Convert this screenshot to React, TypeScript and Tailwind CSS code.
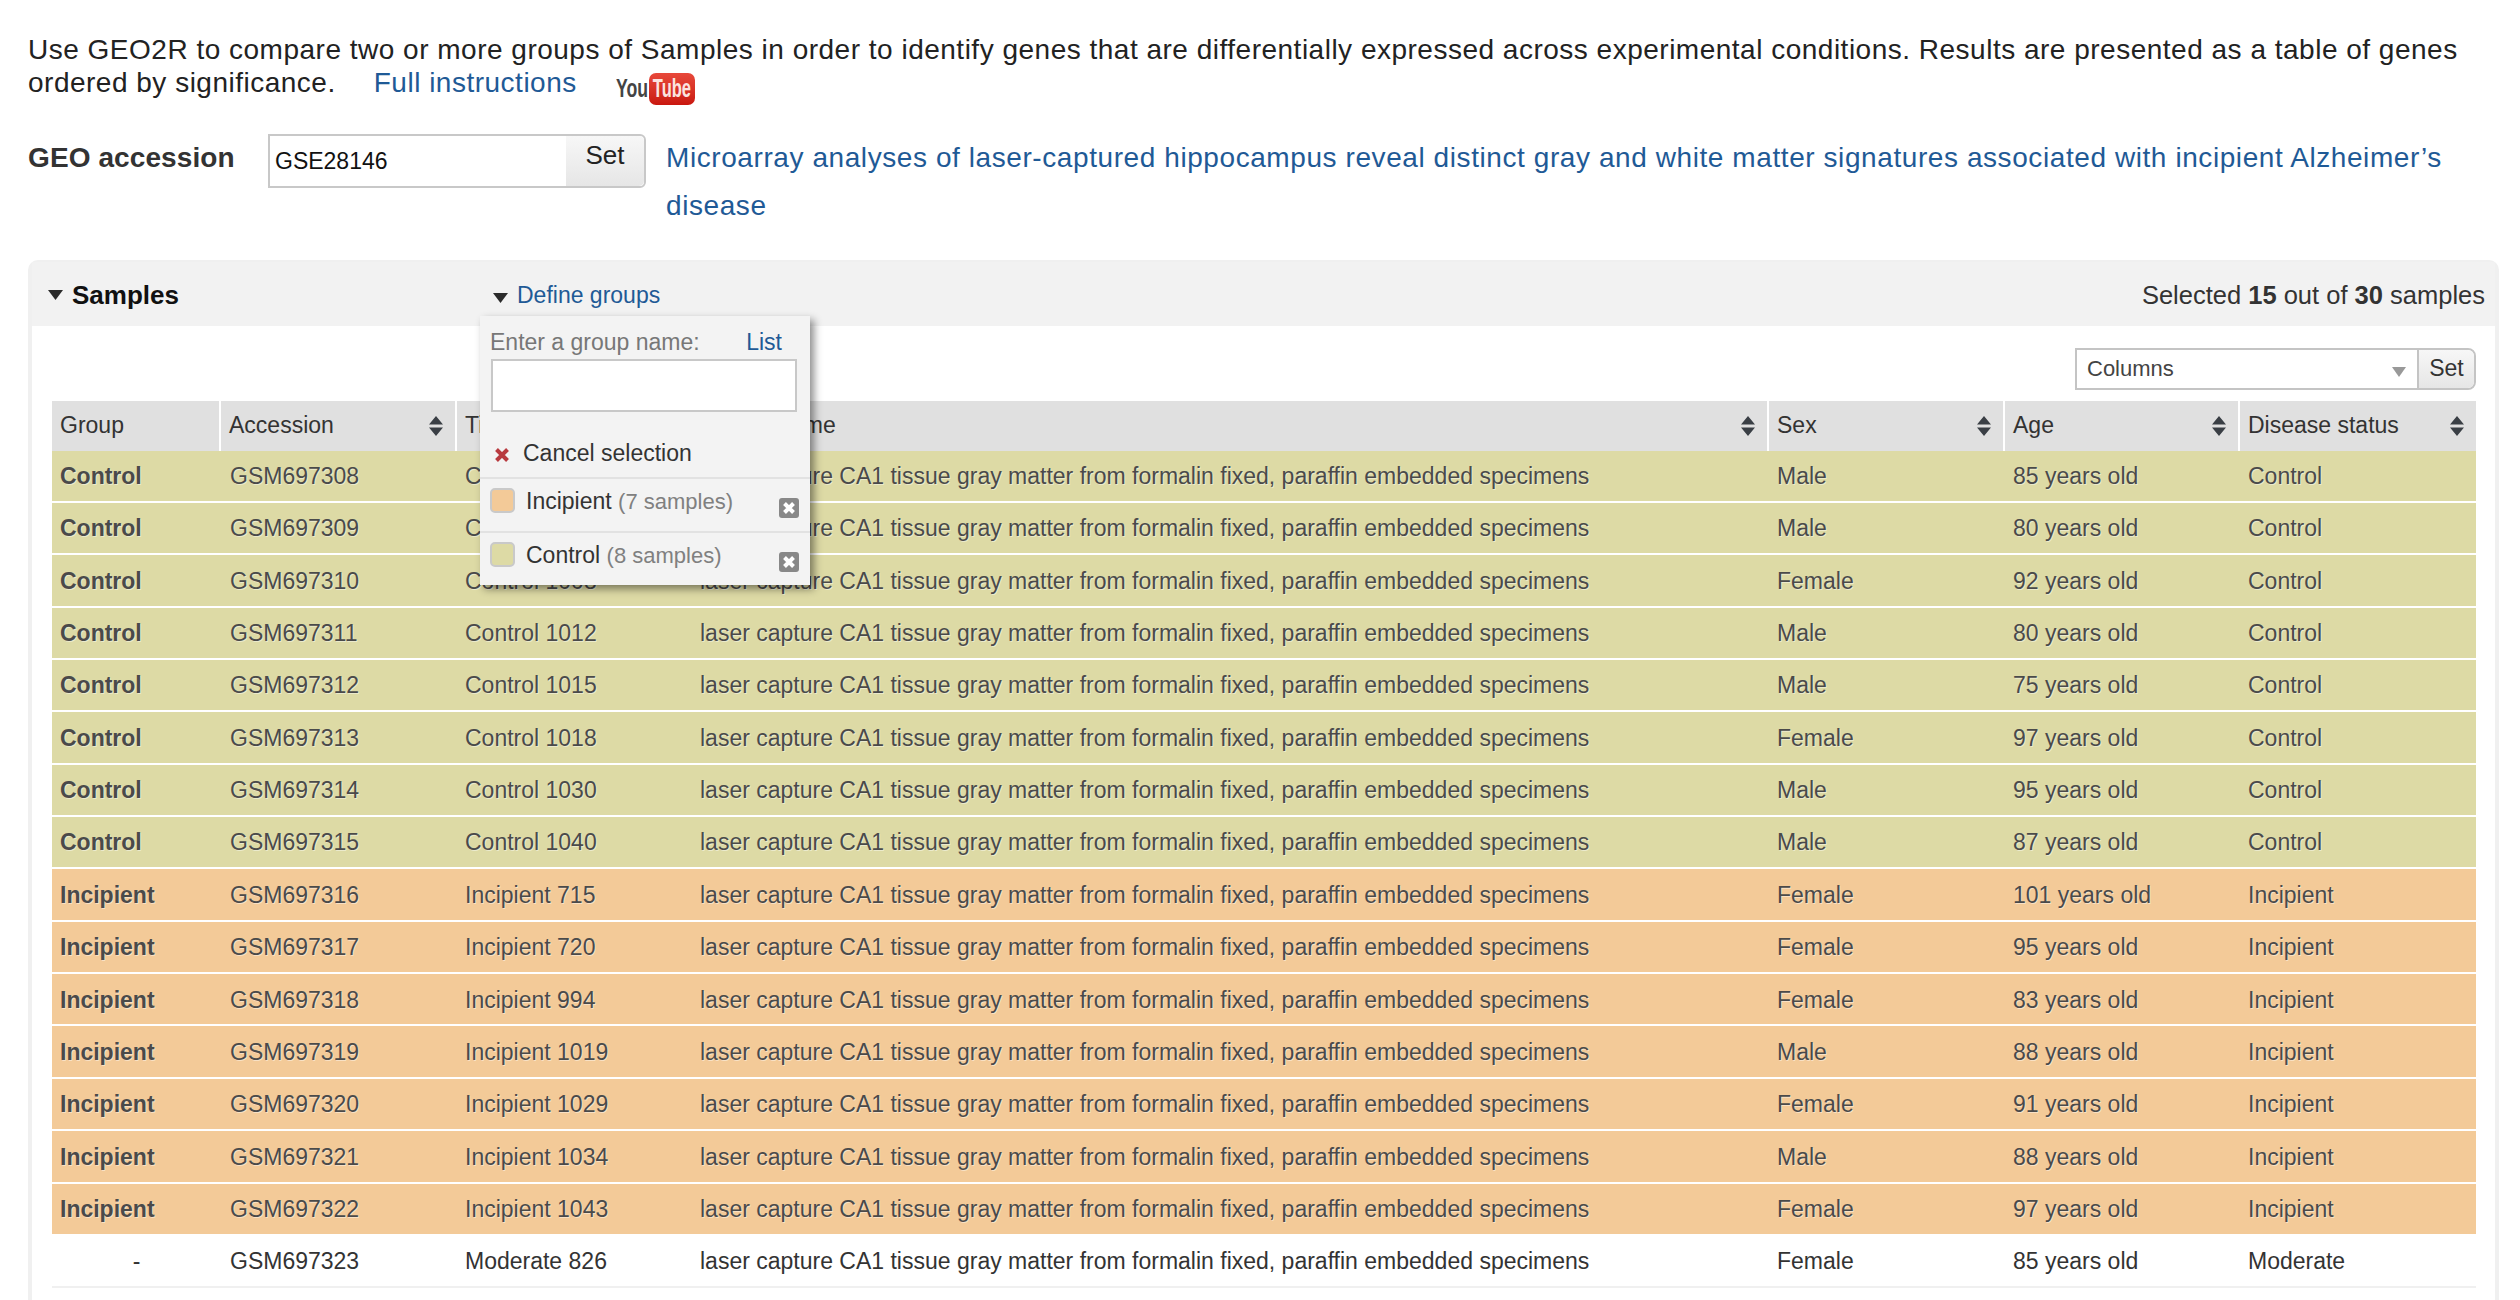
const SOURCE = "laser capture CA1 tissue gray matter from formalin fixed, paraffin embedded specimens";

const ROWS = [
  { group: "Control", acc: "GSM697308", title: "Control 1003", sex: "Male", age: "85 years old", status: "Control" },
  { group: "Control", acc: "GSM697309", title: "Control 1005", sex: "Male", age: "80 years old", status: "Control" },
  { group: "Control", acc: "GSM697310", title: "Control 1008", sex: "Female", age: "92 years old", status: "Control" },
  { group: "Control", acc: "GSM697311", title: "Control 1012", sex: "Male", age: "80 years old", status: "Control" },
  { group: "Control", acc: "GSM697312", title: "Control 1015", sex: "Male", age: "75 years old", status: "Control" },
  { group: "Control", acc: "GSM697313", title: "Control 1018", sex: "Female", age: "97 years old", status: "Control" },
  { group: "Control", acc: "GSM697314", title: "Control 1030", sex: "Male", age: "95 years old", status: "Control" },
  { group: "Control", acc: "GSM697315", title: "Control 1040", sex: "Male", age: "87 years old", status: "Control" },
  { group: "Incipient", acc: "GSM697316", title: "Incipient 715", sex: "Female", age: "101 years old", status: "Incipient" },
  { group: "Incipient", acc: "GSM697317", title: "Incipient 720", sex: "Female", age: "95 years old", status: "Incipient" },
  { group: "Incipient", acc: "GSM697318", title: "Incipient 994", sex: "Female", age: "83 years old", status: "Incipient" },
  { group: "Incipient", acc: "GSM697319", title: "Incipient 1019", sex: "Male", age: "88 years old", status: "Incipient" },
  { group: "Incipient", acc: "GSM697320", title: "Incipient 1029", sex: "Female", age: "91 years old", status: "Incipient" },
  { group: "Incipient", acc: "GSM697321", title: "Incipient 1034", sex: "Male", age: "88 years old", status: "Incipient" },
  { group: "Incipient", acc: "GSM697322", title: "Incipient 1043", sex: "Female", age: "97 years old", status: "Incipient" },
  { group: "-", acc: "GSM697323", title: "Moderate 826", sex: "Female", age: "85 years old", status: "Moderate" },
];

const HEADERS = ["Group", "Accession", "Title", "Source name", "Sex", "Age", "Disease status"];

const COLS = "grid w-[2424px] grid-cols-[169px_236px_234px_1078px_236px_235px_236px]";

const SortIcon = () => (
  <svg width="16" height="20" viewBox="0 0 16 20" className="absolute right-[11px] top-[15px]">
    <path d="M8 0 L15 8.5 H1 Z M1 11.5 H15 L8 20 Z" fill="#3a3f45" />
  </svg>
);

const Caret = ({ className = "" }: { className?: string }) => (
  <svg width="15" height="10" viewBox="0 0 15 10" className={className}>
    <path d="M0 0 H15 L7.5 10 Z" fill="#2b2b2b" />
  </svg>
);

const RemoveIcon = () => (
  <svg width="20" height="20" viewBox="0 0 20 20" className="absolute right-[11px] top-[19px]">
    <rect x="0" y="0" width="20" height="20" rx="3" fill="#888" />
    <path d="M5.5 5.5 L14.5 14.5 M14.5 5.5 L5.5 14.5" stroke="#fff" strokeWidth="4" />
  </svg>
);

const GroupRow = ({ name, count, color }: { name: string; count: string; color: string }) => (
  <div className="relative flex h-[54px] items-start border-t-2 border-[#e2e2e2] pl-[10px] pt-[9px]">
    <span className={`h-[25px] w-[25px] rounded-[5px] border-2 border-[#c9c9c9] ${color}`} />
    <span className="ml-[11px] text-[23px] leading-[26px] text-[#333]">
      {name} <span className="text-[22px] text-[#808080]">({count})</span>
    </span>
    <RemoveIcon />
  </div>
);

export default function App() {
  return (
    <div className="h-[1300px] w-[2520px] overflow-hidden bg-white font-['Liberation_Sans',Arial,sans-serif] text-[#222]">
      <div className="pl-[28px] pr-[21px] pt-[33px]">
        <p className="text-[28px] leading-[33px] tracking-[0.5px]">
          Use GEO2R to compare two or more groups of Samples in order to identify genes that are differentially expressed across experimental conditions. Results are presented as a table of genes
          <br />
          ordered by significance.
          <a className="ml-[38px] text-[#1f5a96]">Full instructions</a>
          <span className="ml-[39px] inline-flex h-[32px] w-[80px] translate-y-[5px] items-center overflow-hidden align-baseline">
            <span className="inline-block w-[33px] origin-left scale-x-[0.68] text-[26px] font-bold tracking-normal text-[#444]">You</span>
            <span className="flex h-[32px] w-[46px] items-center justify-center rounded-[7px] bg-gradient-to-b from-[#e8483a] to-[#c9160e]">
              <span className="inline-block scale-x-[0.66] text-[25px] font-bold tracking-normal text-[#fbe4e0]">Tube</span>
            </span>
          </span>
        </p>

        <div className="mt-[34px] flex items-start">
          <span className="mt-[9px] w-[240px] text-[28px] font-bold leading-[30px] tracking-[0.1px] text-[#333]">GEO accession</span>
          <div className="flex h-[54px] w-[378px] rounded-r-[6px] border-2 border-[#c8c8c8]">
            <input readOnly value="GSE28146" className="w-[296px] bg-white pl-[5px] pt-[2px] text-[23px] text-[#111] outline-none" />
            <div className="flex flex-1 justify-center rounded-r-[5px] bg-gradient-to-b from-[#f7f7f7] to-[#e6e6e6] pt-[4px] text-[26px] leading-[30px]">Set</div>
          </div>
          <a className="ml-[20px] w-[1830px] text-[28px] leading-[48px] tracking-[0.58px] text-[#1f5a96]">
            Microarray analyses of laser-captured hippocampus reveal distinct gray and white matter signatures associated with incipient Alzheimer’s disease
          </a>
        </div>

        <section className="relative mt-[30px] h-[1100px] rounded-t-[10px] border-x-4 border-t-2 border-[#f0f0f0]">
          <div className="relative flex h-[64px] items-center bg-[#f2f2f2] pt-[3px] text-[26px]">
            <Caret className="ml-[16px]" />
            <span className="ml-[9px] font-bold text-[#111]">Samples</span>
            <Caret className="absolute left-[461px] top-[31px]" />
            <a className="absolute left-[485px] text-[23px] text-[#1f5a96]">Define groups</a>
            <span className="absolute right-[10px] text-[25.5px] text-[#333]">
              Selected <b>15</b> out of <b>30</b> samples
            </span>
          </div>

          <div className="pl-[20px]">
            <div className="flex w-[2424px] justify-end pt-[22px]">
              <div className="flex h-[42px] w-[401px] rounded-r-[8px] border-2 border-[#c4c4c4]">
                <div className="relative flex w-[340px] items-center bg-white pl-[10px] text-[22px] text-[#444]">
                  Columns
                  <svg width="14" height="10" viewBox="0 0 14 10" className="absolute right-[11px] top-[17px]">
                    <path d="M0 0 H14 L7 10 Z" fill="#999" />
                  </svg>
                </div>
                <div className="flex flex-1 items-center justify-center rounded-r-[6px] border-l-2 border-[#c4c4c4] bg-gradient-to-b from-[#f7f7f7] to-[#e6e6e6] text-[23px] text-[#333]">Set</div>
              </div>
            </div>

            <div className={`${COLS} mt-[11px] h-[50px] bg-[#e0e0e0] text-[23px] text-[#333]`}>
              {HEADERS.map((h, i) => (
                <div key={h} className="relative flex items-center border-r-2 border-white pl-[8px] last:border-r-0">
                  {h}
                  {i > 0 && <SortIcon />}
                </div>
              ))}
            </div>

            {ROWS.map((r) => {
              const bg =
                r.group === "Control"
                  ? "bg-[#dddaa5] border-white text-[#4a4a4a] [text-shadow:1px_1px_0_rgba(255,255,255,0.45)]"
                  : r.group === "Incipient"
                    ? "bg-[#f3ca98] border-white text-[#4a4a4a] [text-shadow:1px_1px_0_rgba(255,255,255,0.45)]"
                    : "bg-white border-[#f0f0f0] text-[#333]";
              return (
                <div key={r.acc} className={`${COLS} h-[52.36px] items-center border-b-2 pt-[1px] text-[23px] ${bg}`}>
                  {r.group === "-" ? (
                    <div className="text-center">-</div>
                  ) : (
                    <div className="pl-[8px] font-bold">{r.group}</div>
                  )}
                  <div className="pl-[9px]">{r.acc}</div>
                  <div className="pl-[8px]">{r.title}</div>
                  <div className="pl-[9px]">{SOURCE}</div>
                  <div className="pl-[8px]">{r.sex}</div>
                  <div className="pl-[8px]">{r.age}</div>
                  <div className="pl-[8px]">{r.status}</div>
                </div>
              );
            })}
          </div>

          <div className="absolute left-[448px] top-[54px] w-[330px] bg-[#f3f3f3] shadow-[4px_4px_8px_rgba(0,0,0,0.45)]">
            <div className="flex justify-between pl-[10px] pr-[28px] pt-[12px] text-[23px] leading-[28px] text-[#777]">
              <span>Enter a group name:</span>
              <a className="text-[#1f5a96]">List</a>
            </div>
            <input readOnly className="ml-[11px] mt-[3px] block h-[53px] w-[306px] border-2 border-[#c8c8c8] bg-white outline-none" />
            <div className="flex h-[65px] items-center pl-[14px] pt-[19px] text-[23px] text-[#333]">
              <svg width="16" height="16" viewBox="0 0 16 16" className="mt-[3px]">
                <path d="M2.5 2.5 L13.5 13.5 M13.5 2.5 L2.5 13.5" stroke="#b83a3f" strokeWidth="4" />
              </svg>
              <span className="ml-[13px]">Cancel selection</span>
            </div>
            <GroupRow name="Incipient" count="7 samples" color="bg-[#f3ca98]" />
            <GroupRow name="Control" count="8 samples" color="bg-[#dddaa5]" />
          </div>
        </section>
      </div>
    </div>
  );
}
